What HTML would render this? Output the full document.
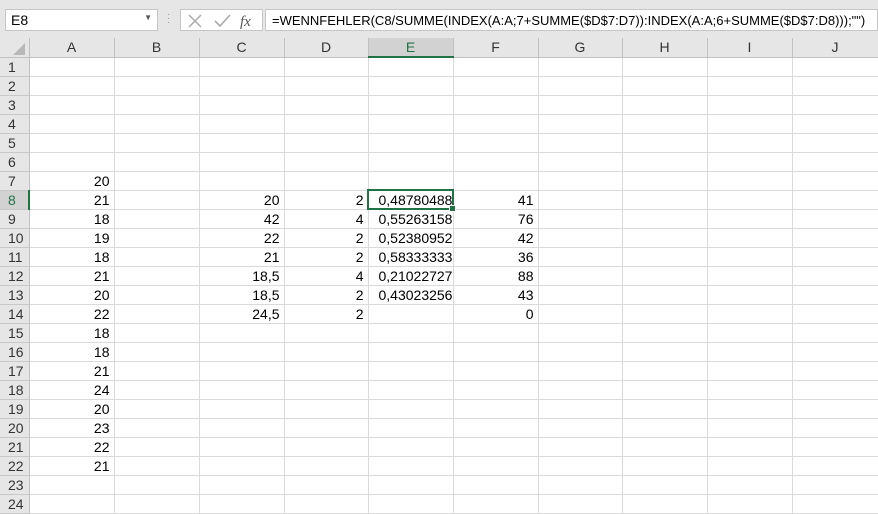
<!DOCTYPE html>
<html><head><meta charset="utf-8"><style>
*{margin:0;padding:0;box-sizing:border-box}
body{width:878px;height:509px;overflow:hidden;background:#fff;font-family:"Liberation Sans",Arial,sans-serif;font-size:14px;color:#000;position:relative}
.top{position:absolute;left:0;top:0;width:878px;height:38px;background:#e6e6e6}
.nb{position:absolute;left:5px;top:9px;width:153px;height:22px;background:#fff;border:1px solid #c6c6c6;font-size:14px;padding:2px 5px}
.nb span{position:absolute;right:5px;top:3px;font-size:8px;color:#555}
.dots{position:absolute;left:167px;top:13px;color:#999;font-size:10px;line-height:4px}
.btns{position:absolute;left:180px;top:9px;width:83px;height:22px;background:#fff;border:1px solid #c6c6c6}
.fb{position:absolute;left:265px;top:9px;width:613px;height:22px;background:#fff;border:1px solid #c6c6c6;padding:3px 6px;font-size:13px;white-space:nowrap;overflow:hidden}
table{position:absolute;left:0;top:38px;width:878px;border-collapse:collapse;table-layout:fixed}
td{height:19px;border-right:1px solid #dadada;border-bottom:1px solid #dadada;padding:0 4px;text-align:right;white-space:nowrap;overflow:visible;line-height:18px}
tr.h td{background:#e6e6e6;text-align:center;border-right:1px solid #c0c0c0;border-bottom:1px solid #c0c0c0;color:#333;height:19px}
td.r{background:#e6e6e6;text-align:left;border-right:1px solid #c0c0c0;border-bottom:1px solid #c8c8c8;color:#333;padding-left:8px}
tr.h td.se{background:#d2d2d2;color:#207346;border-bottom:2px solid #217346}
td.rs{background:#d2d2d2;color:#207346;border-right:2px solid #217346}
td.sel{outline:2px solid #217346;outline-offset:-1px;position:relative}
td.sel:after{content:"";position:absolute;right:-3px;bottom:-3px;width:5px;height:5px;background:#217346;border:1px solid #fff}
td.e{text-align:left;padding-left:10px}
.corner{position:absolute;left:12px;top:42px;z-index:2}
</style></head><body>
<div class="top">
<div class="nb">E8<span>▼</span></div>
<div class="dots">·<br>·<br>·</div>
<div class="btns">
<svg width="83" height="22" style="position:absolute;left:0;top:0">
<path d="M8 5 L20 17 M20 5 L8 17" stroke="#aaa" stroke-width="1.5" fill="none"/>
<path d="M34 11 L39 16 L49 5" stroke="#aaa" stroke-width="1.6" fill="none"/>
<text x="59" y="16" font-family="Liberation Serif,serif" font-style="italic" font-size="15" fill="#555">fx</text>
</svg></div>
<div class="fb">=WENNFEHLER(C8/SUMME(INDEX(A:A;7+SUMME($D$7:D7)):INDEX(A:A;6+SUMME($D$7:D8)));"")</div>
</div>
<table>
<colgroup><col style="width:29px"><col style="width:85px"><col style="width:85px"><col style="width:85px"><col style="width:84px"><col style="width:85px"><col style="width:85px"><col style="width:84px"><col style="width:85px"><col style="width:85px"><col style="width:86px"></colgroup>
<tr class="h"><td></td><td>A</td><td>B</td><td>C</td><td>D</td><td class="se">E</td><td>F</td><td>G</td><td>H</td><td>I</td><td>J</td></tr>
<tr><td class="r">1</td><td></td><td></td><td></td><td></td><td></td><td></td><td></td><td></td><td></td><td></td></tr>
<tr><td class="r">2</td><td></td><td></td><td></td><td></td><td></td><td></td><td></td><td></td><td></td><td></td></tr>
<tr><td class="r">3</td><td></td><td></td><td></td><td></td><td></td><td></td><td></td><td></td><td></td><td></td></tr>
<tr><td class="r">4</td><td></td><td></td><td></td><td></td><td></td><td></td><td></td><td></td><td></td><td></td></tr>
<tr><td class="r">5</td><td></td><td></td><td></td><td></td><td></td><td></td><td></td><td></td><td></td><td></td></tr>
<tr><td class="r">6</td><td></td><td></td><td></td><td></td><td></td><td></td><td></td><td></td><td></td><td></td></tr>
<tr><td class="r">7</td><td>20</td><td></td><td></td><td></td><td></td><td></td><td></td><td></td><td></td><td></td></tr>
<tr><td class="r rs">8</td><td>21</td><td></td><td>20</td><td>2</td><td class="e sel">0,48780488</td><td>41</td><td></td><td></td><td></td><td></td></tr>
<tr><td class="r">9</td><td>18</td><td></td><td>42</td><td>4</td><td class="e">0,55263158</td><td>76</td><td></td><td></td><td></td><td></td></tr>
<tr><td class="r">10</td><td>19</td><td></td><td>22</td><td>2</td><td class="e">0,52380952</td><td>42</td><td></td><td></td><td></td><td></td></tr>
<tr><td class="r">11</td><td>18</td><td></td><td>21</td><td>2</td><td class="e">0,58333333</td><td>36</td><td></td><td></td><td></td><td></td></tr>
<tr><td class="r">12</td><td>21</td><td></td><td>18,5</td><td>4</td><td class="e">0,21022727</td><td>88</td><td></td><td></td><td></td><td></td></tr>
<tr><td class="r">13</td><td>20</td><td></td><td>18,5</td><td>2</td><td class="e">0,43023256</td><td>43</td><td></td><td></td><td></td><td></td></tr>
<tr><td class="r">14</td><td>22</td><td></td><td>24,5</td><td>2</td><td></td><td>0</td><td></td><td></td><td></td><td></td></tr>
<tr><td class="r">15</td><td>18</td><td></td><td></td><td></td><td></td><td></td><td></td><td></td><td></td><td></td></tr>
<tr><td class="r">16</td><td>18</td><td></td><td></td><td></td><td></td><td></td><td></td><td></td><td></td><td></td></tr>
<tr><td class="r">17</td><td>21</td><td></td><td></td><td></td><td></td><td></td><td></td><td></td><td></td><td></td></tr>
<tr><td class="r">18</td><td>24</td><td></td><td></td><td></td><td></td><td></td><td></td><td></td><td></td><td></td></tr>
<tr><td class="r">19</td><td>20</td><td></td><td></td><td></td><td></td><td></td><td></td><td></td><td></td><td></td></tr>
<tr><td class="r">20</td><td>23</td><td></td><td></td><td></td><td></td><td></td><td></td><td></td><td></td><td></td></tr>
<tr><td class="r">21</td><td>22</td><td></td><td></td><td></td><td></td><td></td><td></td><td></td><td></td><td></td></tr>
<tr><td class="r">22</td><td>21</td><td></td><td></td><td></td><td></td><td></td><td></td><td></td><td></td><td></td></tr>
<tr><td class="r">23</td><td></td><td></td><td></td><td></td><td></td><td></td><td></td><td></td><td></td><td></td></tr>
<tr><td class="r">24</td><td></td><td></td><td></td><td></td><td></td><td></td><td></td><td></td><td></td><td></td></tr>
</table>
<svg class="corner" width="14" height="14"><path d="M13 1 L13 13 L1 13Z" fill="#b8b8b8"/></svg>
</body></html>
